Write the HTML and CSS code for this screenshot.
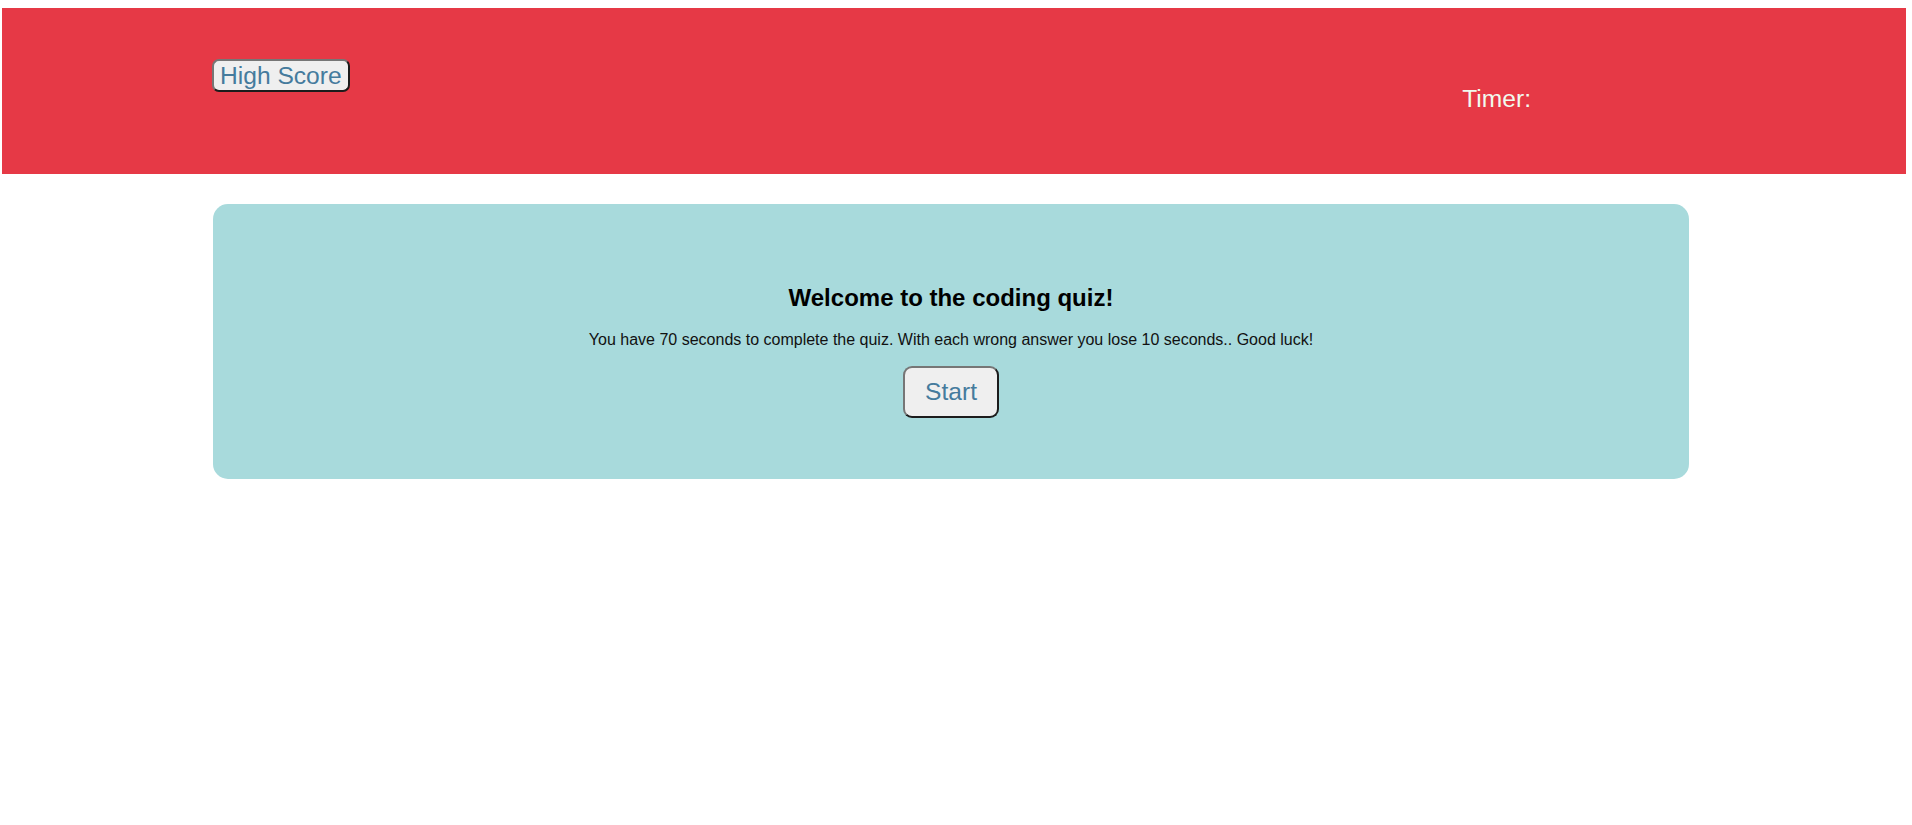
FILE: index.html
```html
<!DOCTYPE html>
<html lang="en">
<head>
<meta charset="utf-8">
<title>Coding Quiz</title>
<link rel="stylesheet" href="styles.css">
</head>
<body>
<header class="top-bar">
  <button class="btn btn-score" type="button">High Score</button>
  <div class="timer">Timer:</div>
</header>
<main class="quiz-card">
  <h2 class="quiz-title">Welcome to the coding quiz!</h2>
  <p class="quiz-text">You have 70 seconds to complete the quiz. With each wrong answer you lose 10 seconds.. Good luck!</p>
  <button class="btn btn-start" type="button">Start</button>
</main>
</body>
</html>
```

FILE: styles.css
```css
html, body {
  margin: 0;
  padding: 0;
  background: #ffffff;
  font-family: "Liberation Sans", Arial, sans-serif;
}

.top-bar {
  margin: 8px 6px 0 2px;
  height: 166px;
  background: #e63946;
  display: flex;
  align-items: flex-start;
  justify-content: space-between;
  padding: 0 375px 0 210px;
  box-sizing: border-box;
}

.btn {
  font-family: "Liberation Sans", Arial, sans-serif;
  font-size: 24.6px;
  color: #457b9d;
  background: #efefef;
  border-style: solid;
  border-width: 2px;
  border-color: #767676 #1c1c1c #1c1c1c #767676;
  cursor: pointer;
}

.btn-score {
  margin-top: 51px;
  line-height: 27px;
  padding: 1px 6px;
  border-radius: 7px;
}

.timer {
  margin-top: 77px;
  font-size: 24.6px;
  line-height: 27px;
  color: #f1faee;
}

.quiz-card {
  margin: 30px 0 0 213px;
  width: 1476px;
  box-sizing: border-box;
  background: #a8dadc;
  border-radius: 15px;
  padding: 80px 0 61px;
  display: flex;
  flex-direction: column;
  align-items: center;
}

.quiz-title {
  margin: 0;
  font-size: 24px;
  line-height: 28px;
  font-weight: bold;
  color: #000;
}

.quiz-text {
  margin: 19px 0 17px;
  font-size: 16px;
  line-height: 18px;
  color: #111;
}

.btn-start {
  line-height: 28px;
  padding: 10px 20px;
  border-radius: 9px;
}
```
